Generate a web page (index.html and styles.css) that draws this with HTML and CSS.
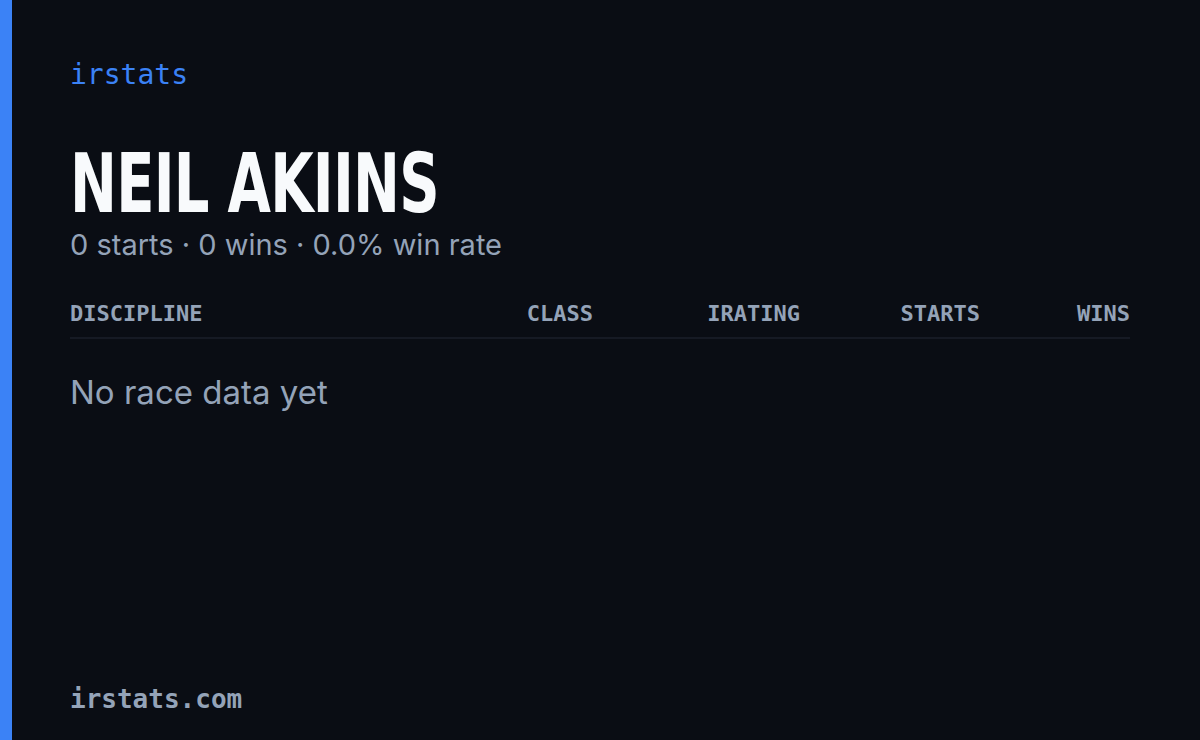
FILE: index.html
```html
<!DOCTYPE html>
<html>
<head>
    <meta name="viewport" content="width=device-width, initial-scale=1.0">
    <title>irstats - Neil Akiins</title>
    <link rel="stylesheet" href="styles.css">
</head>
<body>
    <div class="card">
        <div class="brand">irstats</div>
        <h1 class="driver"><span class="driver-name">NEIL AKIINS</span></h1>
        <p class="summary">0 starts · 0 wins · 0.0% win rate</p>
        <div class="table">
            <div class="thead">
                <div class="th">DISCIPLINE</div>
                <div class="th num">CLASS</div>
                <div class="th num">IRATING</div>
                <div class="th num">STARTS</div>
                <div class="th num">WINS</div>
            </div>
            <p class="empty">No race data yet</p>
        </div>
        <div class="footer">irstats.com</div>
    </div>
</body>
</html>
```

FILE: styles.css
```css
html, body {
    margin: 0;
    padding: 0;
    background-color: #0a0d14;
}
.card {
    display: flex;
    flex-direction: column;
    box-sizing: border-box;
    width: 1200px;
    height: 740px;
    border-left: 12px solid #3b82f6;
    padding: 55px 70px 23px 58px;
    font-family: "Inter", "Noto Sans", sans-serif;
    color: #94a3b8;
}
.brand {
    font-family: "DejaVu Sans Mono", "Liberation Mono", monospace;
    font-size: 28px;
    line-height: 40px;
    color: #3b82f6;
}
.driver {
    margin: 47px 0 0 0;
    font-family: "DejaVu Sans", "Liberation Sans", sans-serif;
    font-weight: 700;
    font-stretch: condensed;
    font-size: 82px;
    line-height: 84px;
    height: 84px;
    color: #f8fafc;
}
.driver-name {
    display: inline-block;
    transform: scaleX(0.76);
    transform-origin: left center;
    letter-spacing: -1px;
}
.summary {
    margin: -1px 0 0 0;
    font-size: 29px;
    line-height: 40px;
}
.table {
    margin-top: 34px;
}
.thead {
    display: grid;
    grid-template-columns: 1fr 140px 207px 180px 150px;
    padding-bottom: 8px;
    border-bottom: 2px solid #161a24;
}
.th {
    font-family: "DejaVu Sans Mono", "Liberation Mono", monospace;
    font-weight: 700;
    font-size: 22px;
    line-height: 30px;
}
.num {
    text-align: right;
}
.empty {
    margin: 33px 0 0 0;
    font-size: 33px;
    line-height: 40px;
}
.footer {
    margin-top: auto;
    font-family: "DejaVu Sans Mono", "Liberation Mono", monospace;
    font-weight: 700;
    font-size: 26px;
    line-height: 36px;
}
```
